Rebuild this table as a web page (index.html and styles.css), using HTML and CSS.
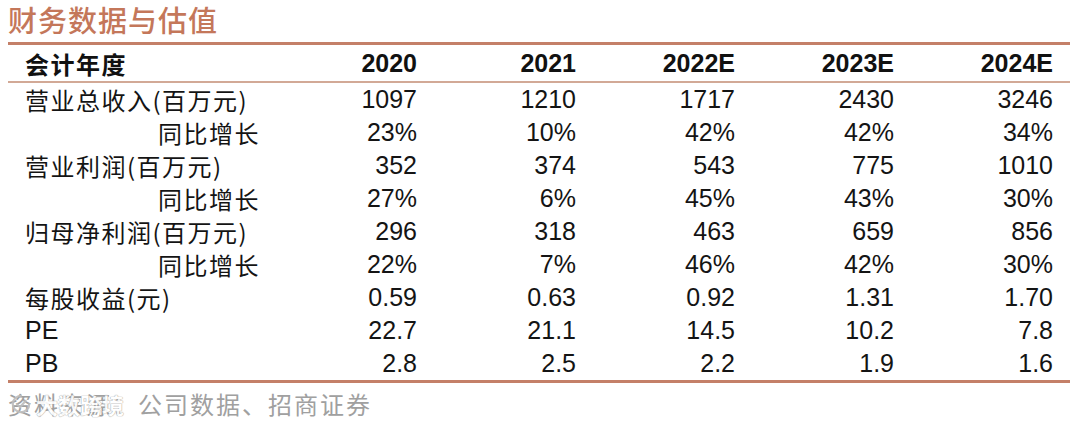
FILE: index.html
```html
<!DOCTYPE html>
<html lang="zh-CN">
<head>
<meta charset="utf-8">
<title>财务数据与估值</title>
<link rel="stylesheet" href="styles.css">
</head>
<body>
<div class="page">
  <h1 class="title">财务数据与估值</h1>
  <table class="fin">
    <colgroup>
      <col class="c-label"><col class="c-num"><col class="c-num"><col class="c-num"><col class="c-num"><col class="c-num">
    </colgroup>
    <thead>
      <tr><th class="label">会计年度</th><th>2020</th><th>2021</th><th>2022E</th><th>2023E</th><th>2024E</th></tr>
    </thead>
    <tbody>
      <tr><td class="label">营业总收入(百万元)</td><td>1097</td><td>1210</td><td>1717</td><td>2430</td><td>3246</td></tr>
      <tr><td class="label sub">同比增长</td><td>23%</td><td>10%</td><td>42%</td><td>42%</td><td>34%</td></tr>
      <tr><td class="label">营业利润(百万元)</td><td>352</td><td>374</td><td>543</td><td>775</td><td>1010</td></tr>
      <tr><td class="label sub">同比增长</td><td>27%</td><td>6%</td><td>45%</td><td>43%</td><td>30%</td></tr>
      <tr><td class="label">归母净利润(百万元)</td><td>296</td><td>318</td><td>463</td><td>659</td><td>856</td></tr>
      <tr><td class="label sub">同比增长</td><td>22%</td><td>7%</td><td>46%</td><td>42%</td><td>30%</td></tr>
      <tr><td class="label">每股收益(元)</td><td>0.59</td><td>0.63</td><td>0.92</td><td>1.31</td><td>1.70</td></tr>
      <tr><td class="label latin">PE</td><td>22.7</td><td>21.1</td><td>14.5</td><td>10.2</td><td>7.8</td></tr>
      <tr><td class="label latin">PB</td><td>2.8</td><td>2.5</td><td>2.2</td><td>1.9</td><td>1.6</td></tr>
    </tbody>
  </table>
  <div class="source">
    <span class="source-text">资料来源：公司数据、招商证券</span>
    <span class="watermark">
      <svg class="wm-icon" viewBox="0 0 24 24" width="22" height="22" aria-hidden="true">
        <path d="M12 3a9 9 0 1 0 9 9" fill="none" stroke="#bdbdbd" stroke-width="2.4" stroke-linecap="round"/>
        <path d="M8 12.5l3 3 6-7" fill="none" stroke="#bdbdbd" stroke-width="2.4" stroke-linecap="round" stroke-linejoin="round"/>
      </svg>
      <span class="wm-text">大数跨境</span>
    </span>
  </div>
</div>
</body>
</html>
```

FILE: styles.css
```css
html, body {
  margin: 0;
  padding: 0;
  background: #ffffff;
}

.page {
  width: 1062px;
  padding: 0 10px 0 8px;
  font-family: "Liberation Sans", "Noto Sans CJK SC", sans-serif;
  color: #141414;
}

.title {
  margin: 0;
  padding: 0 0 3px 0;
  font-family: "Noto Sans CJK SC", sans-serif;
  font-weight: 500;
  font-size: 29px;
  line-height: 39px;
  color: #c4775a;
  letter-spacing: 1px;
}

.fin {
  width: 1062px;
  border-collapse: collapse;
  table-layout: fixed;
  border-top: 3px solid #c48068;
  border-bottom: 3px solid #c48068;
}

.c-label { width: 267px; }
.c-num { width: 159px; }

.fin th,
.fin td {
  padding: 0 17px 0 0;
  text-align: right;
  font-size: 25px;
  white-space: nowrap;
}

.fin thead th {
  height: 36px;
  font-weight: 700;
  border-bottom: 2px solid #d2a996;
  color: #111;
}

.fin tbody td {
  height: 33px;
  line-height: 33px;
  font-weight: 400;
}

.fin .label {
  text-align: left;
  padding-left: 17px;
  font-family: "Noto Sans CJK SC", sans-serif;
  font-size: 24px;
  letter-spacing: 1.5px;
}

.fin thead .label {
  font-weight: 700;
}

.fin .label.sub {
  padding-left: 150px;
}

.fin .label.latin {
  font-family: "Liberation Sans", sans-serif;
  font-size: 25px;
  letter-spacing: 0;
}

.source {
  position: relative;
  margin-top: 3px;
  height: 40px;
  line-height: 36px;
}

.source-text {
  font-family: "Noto Sans CJK SC", sans-serif;
  font-size: 24px;
  color: #a0a0a0;
  letter-spacing: 2px;
}

.watermark {
  position: absolute;
  left: 2px;
  top: 4px;
  display: flex;
  align-items: center;
  gap: 4px;
  opacity: 0.9;
}

.wm-icon {
  display: block;
}

.wm-text {
  font-family: "Noto Sans CJK SC", sans-serif;
  font-size: 22px;
  font-weight: 700;
  color: #ffffff;
  text-shadow: 0 0 1px #9a9a9a, 0 0 1px #9a9a9a;
  line-height: 28px;
}
```
